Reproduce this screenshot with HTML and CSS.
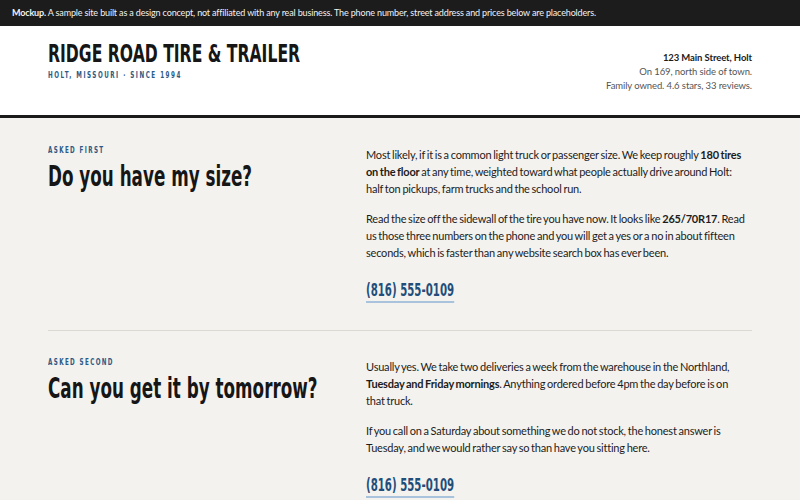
FILE: index.html
```html
<!DOCTYPE html>
<html lang="en">
<head>
    <meta charset="UTF-8">
    <meta name="viewport" content="width=device-width, initial-scale=1.0">
    <title>Ridge Road Tire &amp; Trailer</title>
    <link rel="stylesheet" href="styles.css">
</head>
<body>
    <div class="notice">
        <strong>Mockup.</strong> A sample site built as a design concept, not affiliated with any real business. The phone number, street address and prices below are placeholders.
    </div>

    <header class="site-header">
        <div class="brand">
            <h1>Ridge Road Tire &amp; Trailer</h1>
            <div class="tagline">Holt, Missouri · Since 1994</div>
        </div>
        <div class="address">
            <strong>123 Main Street, Holt</strong>
            <span>On 169, north side of town.</span>
            <span>Family owned. 4.6 stars, 33 reviews.</span>
        </div>
    </header>

    <main class="faq">
        <section class="question">
            <div class="ask">
                <div class="eyebrow">Asked first</div>
                <h2>Do you have my size?</h2>
            </div>
            <div class="answer">
                <p>Most likely, if it is a common light truck or passenger size. We keep roughly <strong>180 tires on the floor</strong> at any time, weighted toward what people actually drive around Holt: half ton pickups, farm trucks and the school run.</p>
                <p>Read the size off the sidewall of the tire you have now. It looks like <strong>265/70R17</strong>. Read us those three numbers on the phone and you will get a yes or a no in about fifteen seconds, which is faster than any website search box has ever been.</p>
                <a class="phone" href="tel:8165550109">(816) 555-0109</a>
            </div>
        </section>

        <section class="question">
            <div class="ask">
                <div class="eyebrow">Asked second</div>
                <h2>Can you get it by tomorrow?</h2>
            </div>
            <div class="answer">
                <p>Usually yes. We take two deliveries a week from the warehouse in the Northland, <strong>Tuesday and Friday mornings</strong>. Anything ordered before 4pm the day before is on that truck.</p>
                <p>If you call on a Saturday about something we do not stock, the honest answer is Tuesday, and we would rather say so than have you sitting here.</p>
                <a class="phone" href="tel:8165550109">(816) 555-0109</a>
            </div>
        </section>
    </main>
</body>
</html>
```

FILE: styles.css
```css
* {
    box-sizing: border-box;
}

body {
    margin: 0;
    font-family: Lato, "Noto Sans", sans-serif;
    background-color: #f4f2ee;
    color: #1c1c1c;
}

.notice {
    background-color: #1c1c1c;
    color: #f2f2f2;
    font-size: 9px;
    letter-spacing: -0.15px;
    line-height: 14px;
    padding: 6px 12px;
}

.site-header {
    background-color: #fff;
    border-bottom: 3px solid #1a1a1a;
    padding: 13px 48px 0;
    height: 92px;
    display: flex;
    justify-content: space-between;
    align-items: flex-start;
}

/* no condensed face installed, so squeeze the display font */
h1, h2, .eyebrow, .tagline, .phone {
    font-family: "DejaVu Sans", sans-serif;
    font-weight: bold;
    white-space: nowrap;
    transform: scaleX(0.6);
    transform-origin: left center;
}

h1 {
    margin: 0;
    font-size: 25px;
    line-height: 30px;
    text-transform: uppercase;
    color: #161616;
    transform: scaleX(0.625);
}

.tagline {
    font-size: 8.5px;
    line-height: 12px;
    letter-spacing: 2.3px;
    text-transform: uppercase;
    color: #2c5a85;
    transform: scaleX(0.66);
}

.address {
    margin-top: 12px;
    display: flex;
    flex-direction: column;
    align-items: flex-end;
    font-size: 9.5px;
    letter-spacing: -0.1px;
    line-height: 14px;
    color: #555;
}

.address strong {
    color: #1c1c1c;
}

.faq {
    padding: 0 48px;
}

.question {
    display: grid;
    grid-template-columns: 286px 1fr;
    gap: 32px;
    padding: 28px 0 27px;
    border-bottom: 1px solid #dcd9d3;
}

.question:last-child {
    border-bottom: none;
    padding-top: 27px;
}

.eyebrow {
    margin-top: -2px;
    font-size: 8.5px;
    line-height: 12px;
    letter-spacing: 2.1px;
    text-transform: uppercase;
    color: #2c5a85;
    transform: scaleX(0.66);
}

h2 {
    margin: 4px 0 0;
    font-size: 28px;
    line-height: 34px;
    color: #161616;
}

.answer p {
    max-width: 380px;
    margin: 0 0 13px;
    font-size: 11px;
    letter-spacing: -0.2px;
    word-spacing: -0.8px;
    line-height: 17px;
}

.phone {
    display: inline-block;
    margin-top: 5px;
    font-size: 17px;
    line-height: 22px;
    color: #1f4e7a;
    text-decoration: none;
    border-bottom: 2px solid #a9c3dc;
}
```
